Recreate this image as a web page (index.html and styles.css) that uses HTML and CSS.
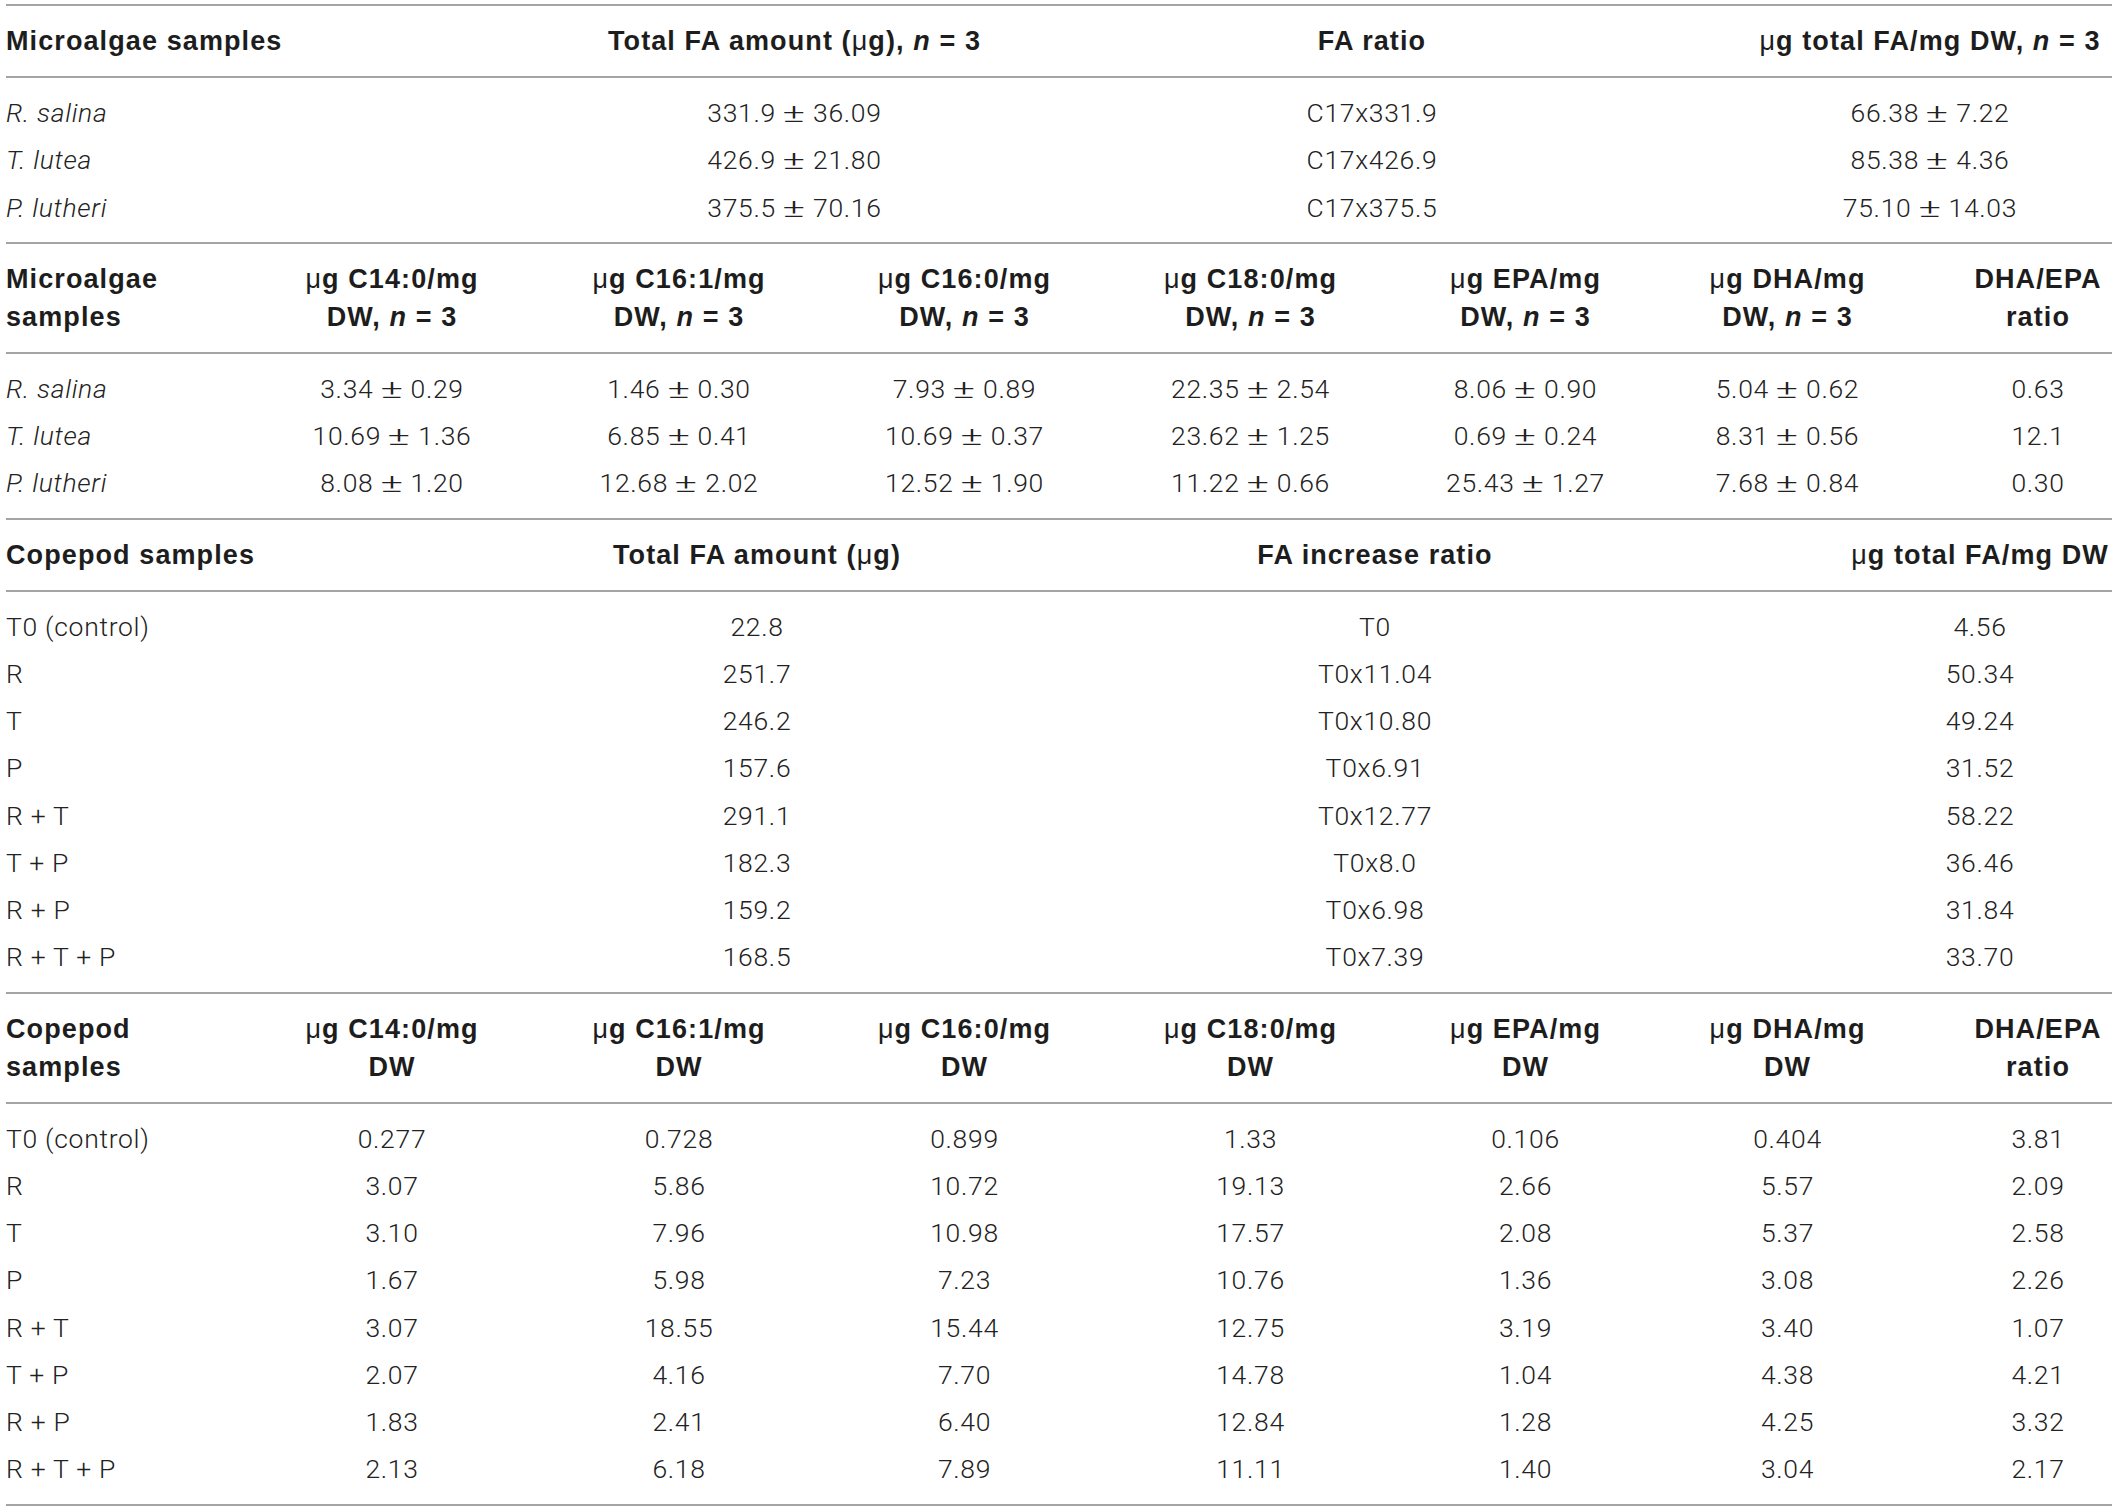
FILE: index.html
```html
<!DOCTYPE html>
<html lang="en">
<head>
  <meta charset="UTF-8">
  <title>Fatty acid content</title>
  <link rel="stylesheet" href="styles.css">
</head>
<body>

<div class="sheet">

  <!-- microalgae: total FA -->
  <table class="first sum-algae">
    <colgroup><col><col><col><col></colgroup>
    <thead>
      <tr>
        <th>Microalgae samples</th>
        <th>Total FA amount (<span class="mu">&mu;</span>g), <i>n</i> = 3</th>
        <th>FA ratio</th>
        <th><span class="mu">&mu;</span>g total FA/mg DW, <i>n</i> = 3</th>
      </tr>
    </thead>
    <tbody>
      <tr><td><i>R. salina</i></td><td>331.9 <span class="pm">&plusmn;</span> 36.09</td><td>C17x331.9</td><td>66.38 <span class="pm">&plusmn;</span> 7.22</td></tr>
      <tr><td><i>T. lutea</i></td><td>426.9 <span class="pm">&plusmn;</span> 21.80</td><td>C17x426.9</td><td>85.38 <span class="pm">&plusmn;</span> 4.36</td></tr>
      <tr><td><i>P. lutheri</i></td><td>375.5 <span class="pm">&plusmn;</span> 70.16</td><td>C17x375.5</td><td>75.10 <span class="pm">&plusmn;</span> 14.03</td></tr>
    </tbody>
  </table>

  <!-- microalgae: single FA -->
  <table class="fa">
    <colgroup><col><col><col><col><col><col><col><col></colgroup>
    <thead>
      <tr>
        <th>Microalgae<br>samples</th>
        <th><span class="mu">&mu;</span>g C14:0/mg<br>DW, <i>n</i> = 3</th>
        <th><span class="mu">&mu;</span>g C16:1/mg<br>DW, <i>n</i> = 3</th>
        <th><span class="mu">&mu;</span>g C16:0/mg<br>DW, <i>n</i> = 3</th>
        <th><span class="mu">&mu;</span>g C18:0/mg<br>DW, <i>n</i> = 3</th>
        <th><span class="mu">&mu;</span>g EPA/mg<br>DW, <i>n</i> = 3</th>
        <th><span class="mu">&mu;</span>g DHA/mg<br>DW, <i>n</i> = 3</th>
        <th>DHA/EPA<br>ratio</th>
      </tr>
    </thead>
    <tbody>
      <tr><td><i>R. salina</i></td><td>3.34 <span class="pm">&plusmn;</span> 0.29</td><td>1.46 <span class="pm">&plusmn;</span> 0.30</td><td>7.93 <span class="pm">&plusmn;</span> 0.89</td><td>22.35 <span class="pm">&plusmn;</span> 2.54</td><td>8.06 <span class="pm">&plusmn;</span> 0.90</td><td>5.04 <span class="pm">&plusmn;</span> 0.62</td><td>0.63</td></tr>
      <tr><td><i>T. lutea</i></td><td>10.69 <span class="pm">&plusmn;</span> 1.36</td><td>6.85 <span class="pm">&plusmn;</span> 0.41</td><td>10.69 <span class="pm">&plusmn;</span> 0.37</td><td>23.62 <span class="pm">&plusmn;</span> 1.25</td><td>0.69 <span class="pm">&plusmn;</span> 0.24</td><td>8.31 <span class="pm">&plusmn;</span> 0.56</td><td>12.1</td></tr>
      <tr><td><i>P. lutheri</i></td><td>8.08 <span class="pm">&plusmn;</span> 1.20</td><td>12.68 <span class="pm">&plusmn;</span> 2.02</td><td>12.52 <span class="pm">&plusmn;</span> 1.90</td><td>11.22 <span class="pm">&plusmn;</span> 0.66</td><td>25.43 <span class="pm">&plusmn;</span> 1.27</td><td>7.68 <span class="pm">&plusmn;</span> 0.84</td><td>0.30</td></tr>
    </tbody>
  </table>

  <!-- copepod: total FA -->
  <table class="sum-cope">
    <colgroup><col><col><col><col></colgroup>
    <thead>
      <tr>
        <th>Copepod samples</th>
        <th>Total FA amount (<span class="mu">&mu;</span>g)</th>
        <th>FA increase ratio</th>
        <th><span class="mu">&mu;</span>g total FA/mg DW</th>
      </tr>
    </thead>
    <tbody>
      <tr><td>T0 (control)</td><td>22.8</td><td>T0</td><td>4.56</td></tr>
      <tr><td>R</td><td>251.7</td><td>T0x11.04</td><td>50.34</td></tr>
      <tr><td>T</td><td>246.2</td><td>T0x10.80</td><td>49.24</td></tr>
      <tr><td>P</td><td>157.6</td><td>T0x6.91</td><td>31.52</td></tr>
      <tr><td>R + T</td><td>291.1</td><td>T0x12.77</td><td>58.22</td></tr>
      <tr><td>T + P</td><td>182.3</td><td>T0x8.0</td><td>36.46</td></tr>
      <tr><td>R + P</td><td>159.2</td><td>T0x6.98</td><td>31.84</td></tr>
      <tr><td>R + T + P</td><td>168.5</td><td>T0x7.39</td><td>33.70</td></tr>
    </tbody>
  </table>

  <!-- copepod: single FA -->
  <table class="fa">
    <colgroup><col><col><col><col><col><col><col><col></colgroup>
    <thead>
      <tr>
        <th>Copepod<br>samples</th>
        <th><span class="mu">&mu;</span>g C14:0/mg<br>DW</th>
        <th><span class="mu">&mu;</span>g C16:1/mg<br>DW</th>
        <th><span class="mu">&mu;</span>g C16:0/mg<br>DW</th>
        <th><span class="mu">&mu;</span>g C18:0/mg<br>DW</th>
        <th><span class="mu">&mu;</span>g EPA/mg<br>DW</th>
        <th><span class="mu">&mu;</span>g DHA/mg<br>DW</th>
        <th>DHA/EPA<br>ratio</th>
      </tr>
    </thead>
    <tbody>
      <tr><td>T0 (control)</td><td>0.277</td><td>0.728</td><td>0.899</td><td>1.33</td><td>0.106</td><td>0.404</td><td>3.81</td></tr>
      <tr><td>R</td><td>3.07</td><td>5.86</td><td>10.72</td><td>19.13</td><td>2.66</td><td>5.57</td><td>2.09</td></tr>
      <tr><td>T</td><td>3.10</td><td>7.96</td><td>10.98</td><td>17.57</td><td>2.08</td><td>5.37</td><td>2.58</td></tr>
      <tr><td>P</td><td>1.67</td><td>5.98</td><td>7.23</td><td>10.76</td><td>1.36</td><td>3.08</td><td>2.26</td></tr>
      <tr><td>R + T</td><td>3.07</td><td>18.55</td><td>15.44</td><td>12.75</td><td>3.19</td><td>3.40</td><td>1.07</td></tr>
      <tr><td>T + P</td><td>2.07</td><td>4.16</td><td>7.70</td><td>14.78</td><td>1.04</td><td>4.38</td><td>4.21</td></tr>
      <tr><td>R + P</td><td>1.83</td><td>2.41</td><td>6.40</td><td>12.84</td><td>1.28</td><td>4.25</td><td>3.32</td></tr>
      <tr><td>R + T + P</td><td>2.13</td><td>6.18</td><td>7.89</td><td>11.11</td><td>1.40</td><td>3.04</td><td>2.17</td></tr>
    </tbody>
  </table>

</div>

</body>
</html>
```

FILE: styles.css
```css
* {
  margin: 0;
  padding: 0;
}
body {
  background-color: #fff;
  font-family: "Liberation Sans", Arial, sans-serif;
  color: #2e2e2e;
}
.sheet {
  width: 2106px;
  padding: 4px 0 0 6px;
}
table {
  width: 100%;
  table-layout: fixed;
  border-collapse: separate;
  border-spacing: 0;
  border-bottom: 2px solid #a4a4a4;
}
.first {
  border-top: 2px solid #a4a4a4;
}
th {
  font-size: 27px;
  font-weight: bold;
  letter-spacing: 1.1px;
  line-height: 38px;
  padding: 16px 0;
  text-align: center;
  vertical-align: middle;
  white-space: nowrap;
  color: #1d1d1d;
  border-bottom: 2px solid #a4a4a4;
}
/* μ 在原表里是细体 */
.mu {
  font-weight: normal;
}
td {
  font-family: Roboto, "Liberation Sans", sans-serif;
  font-weight: 300;
  font-size: 26.5px;
  letter-spacing: 0.7px;
  line-height: 47.25px;
  text-align: center;
  white-space: nowrap;
  color: #222;
}
/* 原表的 ± 比正文字宽 */
.pm {
  display: inline-block;
  transform: scaleX(1.6);
  margin: 0 4px;
}
th:first-child,
td:first-child {
  text-align: left;
}
tbody tr:first-child td {
  padding-top: 11px;
}
tbody tr:last-child td {
  padding-bottom: 11px;
}

/* 列宽：让每列的中线落在原表的位置上 */
.sum-algae col:nth-child(1) { width: 587px; }
.sum-algae col:nth-child(2) { width: 403px; }
.sum-algae col:nth-child(3) { width: 752px; }
.sum-algae col:nth-child(4) { width: 364px; }

.sum-cope col:nth-child(1) { width: 606px; }
.sum-cope col:nth-child(2) { width: 290px; }
.sum-cope col:nth-child(3) { width: 946px; }
.sum-cope col:nth-child(4) { width: 264px; }

.fa col:nth-child(1) { width: 288px; }
.fa col:nth-child(2) { width: 196px; }
.fa col:nth-child(3) { width: 378px; }
.fa col:nth-child(4) { width: 193px; }
.fa col:nth-child(5) { width: 379px; }
.fa col:nth-child(6) { width: 171px; }
.fa col:nth-child(7) { width: 353px; }
.fa col:nth-child(8) { width: 148px; }
```
